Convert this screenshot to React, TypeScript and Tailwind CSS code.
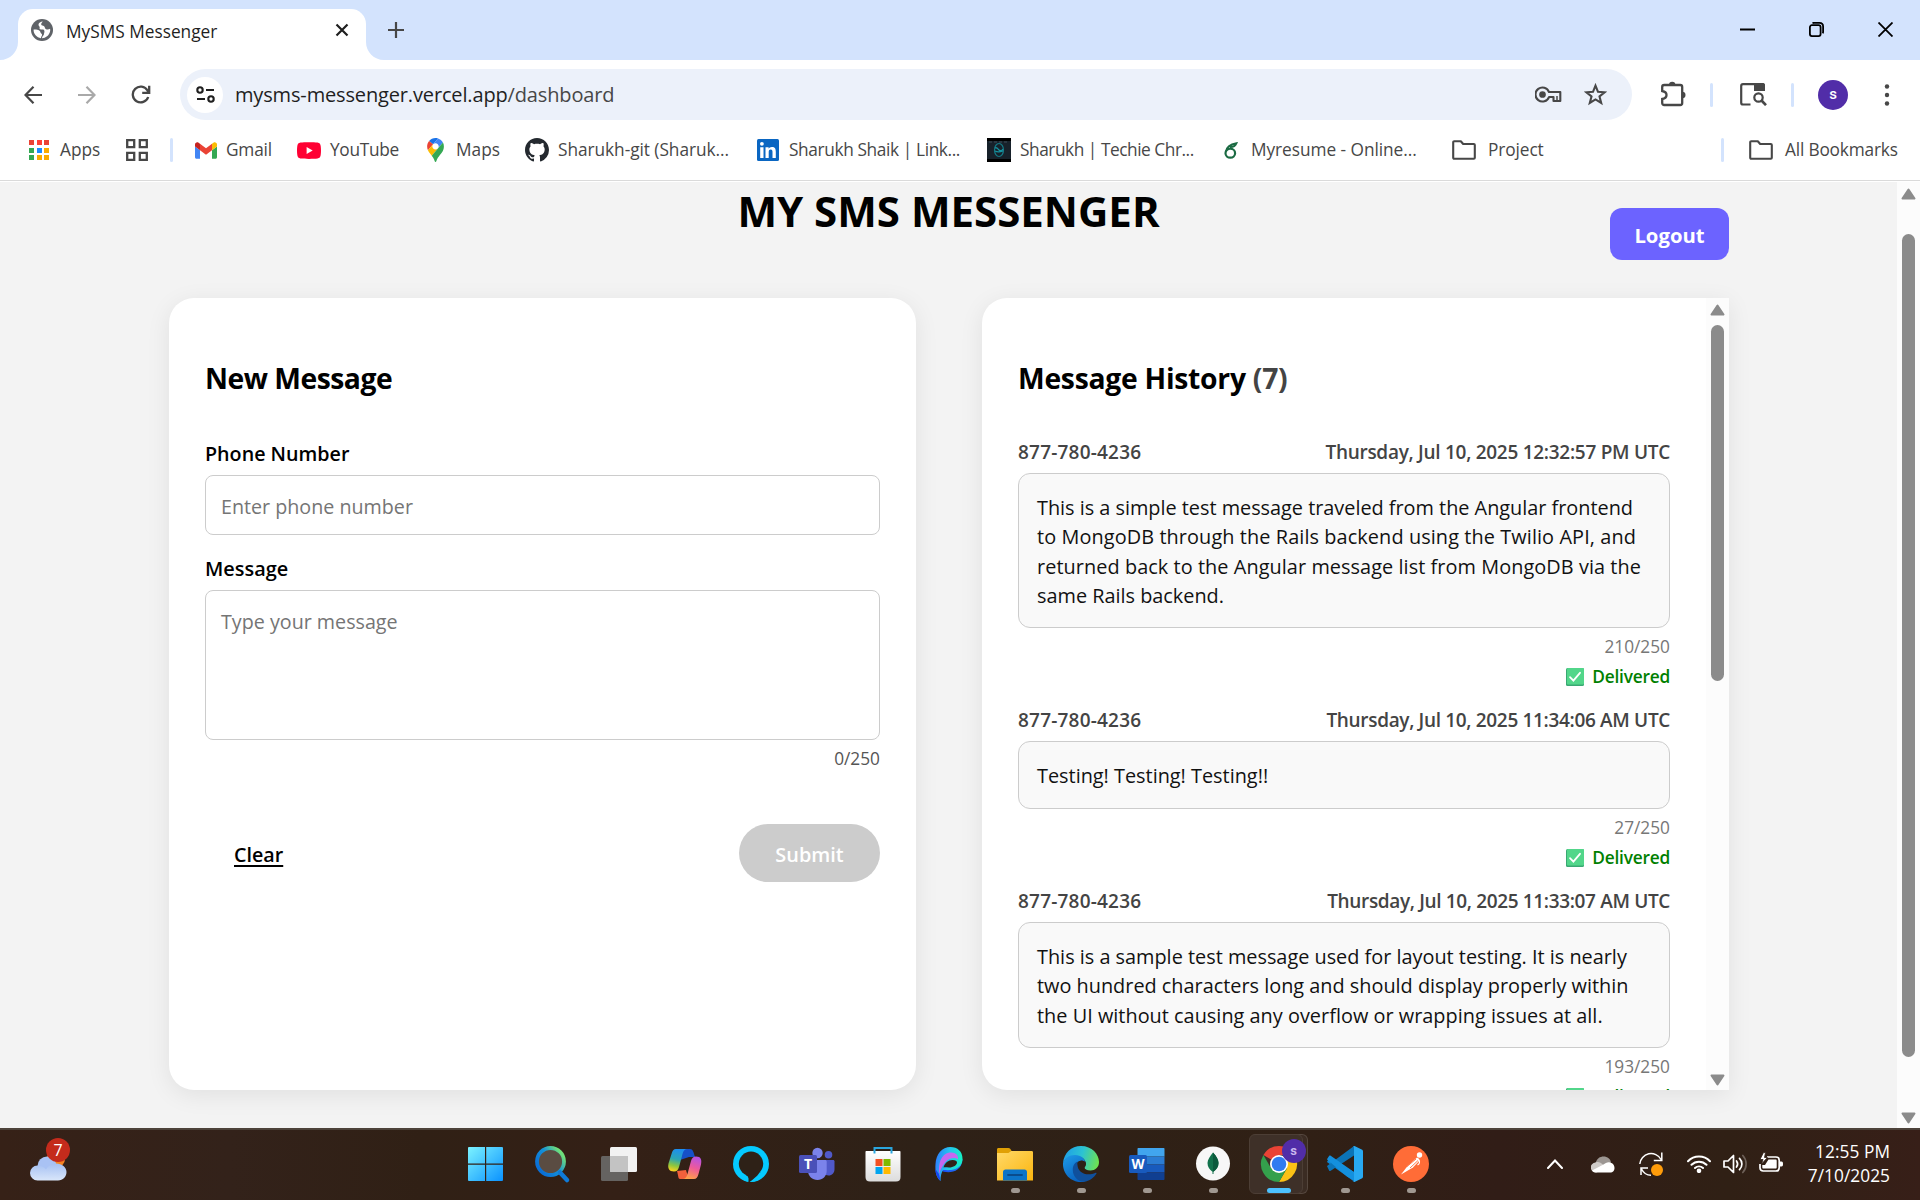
import type { ReactNode } from "react";

/* ---------- browser chrome icons ---------- */

const Globe = () => (
  <svg className="size-[22px]" viewBox="0 0 22 22">
    <circle cx="11" cy="11" r="11" fill="#5f6368" />
    <path d="M11.800 2.600C9.500 2.800 7.800 4 7.500 5.500c-.2 1.400 1.300 1.700 1.200 3-.1.900-.3 1.400.3 1.800.8.400 2.400-.2 3.400.3 1.300.6 1.200 2.300.8 3.400-.4 1.200-.2 2.200-1.300 3-.6.500-.9 1.200-.9 2.300 3.800-.2 7-2.800 8-6.500.3-1.200.3-2 .1-3.100-1.300.9-3 1.200-4.300.3-1.200-.8-.6-2-1.700-2.800-1-.7-2.600-.2-2.900-1.600-.2-1 .8-2 1.600-3z" fill="#fff" />
    <path d="M2.600 10.600c1.900-.2 4.200 0 5.600.9 1.600 1 1 2.300 2.300 3.200.8.6.7 1.600.2 2.300-.5.600-.6 1.200-.7 2.300-4.300-.6-7.600-4.200-7.400-8.700z" fill="#fff" />
  </svg>
);

const Folder = () => (
  <svg className="h-[20px] w-[24px] shrink-0" viewBox="0 0 24 20" fill="none" stroke="#474747" strokeWidth="2.100" strokeLinejoin="round">
    <path d="M1.200 17.800V2.200c0-.6.400-1 1-1h6.600L11.200 4H21.800c.6 0 1 .4 1 1v12.800c0 .6-.4 1-1 1H2.200c-.6 0-1-.4-1-1z" />
  </svg>
);

const AppsIcon = () => {
  const colors = ["#ea4335", "#ff4137", "#ea4335", "#34a853", "#1a8cff", "#fbab00", "#34a853", "#f9ab00", "#fbab00"];
  return (
    <div className="grid size-[20px] shrink-0 grid-cols-3 gap-[2.500px]">
      {colors.map((c, i) => (
        <span key={i} style={{ backgroundColor: c }} />
      ))}
    </div>
  );
};

const GridIcon = () => (
  <svg className="size-[22px] shrink-0" viewBox="0 0 22 22" fill="none" stroke="#474747" strokeWidth="2.300">
    <path d="M1.200 1.200h7v7h-7zM13.800 1.200h7v7h-7zM1.200 13.800h7v7h-7zM13.800 13.800h7v7h-7z" />
  </svg>
);

const GmailIcon = () => (
  <svg className="h-[17px] w-[22px] shrink-0" viewBox="52 42 88 66">
    <path fill="#4285f4" d="M58 108h14V74L52 59v43c0 3.320 2.690 6 6 6" />
    <path fill="#34a853" d="M120 108h14c3.320 0 6-2.690 6-6V59l-20 15" />
    <path fill="#fbbc04" d="M120 48v26l20-15v-8c0-7.420-8.470-11.650-14.400-7.200" />
    <path fill="#ea4335" d="M72 74V48l24 18 24-18v26L96 92" />
    <path fill="#c5221f" d="M52 51v8l20 15V48l-5.600-4.200c-5.940-4.450-14.400-.22-14.400 7.200" />
  </svg>
);

const YouTubeIcon = () => (
  <svg className="h-[17px] w-[24px] shrink-0" viewBox="0 0 24 17">
    <path d="M3.500.5C7 0 17 0 20.500.5 22.500.8 23.500 2 23.700 4c.4 3 .4 6 0 9-.2 2-1.200 3.200-3.200 3.500-3.500.5-13.500.5-17 0C1.500 16.200.5 15 .3 13c-.4-3-.4-6 0-9C.5 2 1.500.8 3.500.5z" fill="#ff0033" />
    <path d="M9.600 5v7l6.100-3.500z" fill="#fff" />
  </svg>
);

const MapsIcon = () => (
  <svg className="h-[24px] w-[17px] shrink-0" viewBox="0 0 92.300 132.300">
    <path fill="#1a73e8" d="M60.200 2.200C55.800.8 51 0 46.100 0 32 0 19.300 6.400 10.800 16.500l21.800 18.300L60.200 2.200z" />
    <path fill="#ea4335" d="M10.800 16.500C4.100 24.500 0 34.900 0 46.100c0 8.700 1.700 15.700 4.600 22l28-33.300-21.800-18.300z" />
    <path fill="#4285f4" d="M46.200 28.500c9.800 0 17.700 7.900 17.700 17.700 0 4.300-1.600 8.300-4.200 11.400 0 0 13.900-16.600 27.500-32.700-5.600-10.800-15.300-19-27-22.700L32.600 34.800c3.300-3.800 8.100-6.300 13.600-6.300" />
    <path fill="#fbbc04" d="M46.200 63.800c-9.800 0-17.700-7.900-17.700-17.700 0-4.300 1.500-8.300 4.100-11.300l-28 33.300c4.800 10.600 12.800 19.200 21 29.900l34.100-40.500c-3.300 3.900-8.100 6.300-13.500 6.300" />
    <path fill="#34a853" d="M59.100 109.200c15.400-24.100 33.300-35 33.300-63 0-7.700-1.900-14.900-5.200-21.300L25.600 98c2.600 3.400 5.300 7.300 7.900 11.300 9.400 14.500 6.800 23.100 12.800 23.100s3.400-8.700 12.800-23.200" />
  </svg>
);

const GithubIcon = () => (
  <svg className="size-[24px] shrink-0" viewBox="0 0 16 16" fill="#24292f">
    <path d="M8 0C3.580 0 0 3.580 0 8c0 3.540 2.290 6.530 5.470 7.590.4.070.55-.17.55-.38 0-.19-.01-.82-.01-1.490-2.010.37-2.530-.49-2.690-.94-.09-.23-.48-.94-.82-1.130-.28-.15-.68-.52-.01-.53.63-.01 1.080.58 1.230.82.72 1.210 1.870.87 2.330.66.07-.52.28-.87.51-1.070-1.780-.2-3.640-.89-3.640-3.950 0-.87.31-1.590.82-2.150-.08-.2-.36-1.020.08-2.120 0 0 .67-.21 2.200.82.64-.18 1.320-.27 2-.27s1.360.09 2 .27c1.530-1.040 2.200-.82 2.200-.82.44 1.100.16 1.920.08 2.120.51.56.82 1.270.82 2.150 0 3.070-1.870 3.750-3.650 3.950.29.25.54.73.54 1.480 0 1.070-.01 1.930-.01 2.200 0 .21.15.46.55.38A8.010 8.010 0 0 0 16 8c0-4.420-3.580-8-8-8z" />
  </svg>
);

const LinkedinIcon = () => (
  <svg className="size-[22px] shrink-0" viewBox="0 0 22 22">
    <rect width="22" height="22" rx="1.500" fill="#0a66c2" />
    <path d="M3.200 8.200h3.300V19H3.200zM8.500 8.200h3.100v1.500c.6-1 1.700-1.800 3.300-1.800 3.200 0 3.900 2 3.900 4.900V19h-3.300v-5.500c0-1.400-.1-2.900-1.800-2.900s-2 1.300-2 2.800V19H8.500z" fill="#fff" />
    <circle cx="4.900" cy="4.800" r="1.900" fill="#fff" />
  </svg>
);

const TechieIcon = () => (
  <svg className="size-[24px] shrink-0" viewBox="0 0 24 24">
    <rect width="24" height="24" fill="#000" />
    <rect y="3" width="24" height="18" fill="#17212a" />
    <path d="M2 4h20" stroke="#2a3741" strokeWidth="2" strokeDasharray="3 2" />
    <ellipse cx="12" cy="12" rx="4.500" ry="6.500" fill="none" stroke="#157985" strokeWidth="1.200" />
    <path d="M8 10c2-1 3 1 4 2s3 1 4-1M8 13c2 1 5 1 8 0" stroke="#1593a0" strokeWidth="1.300" fill="none" />
  </svg>
);

const ResumeIcon = () => (
  <svg className="h-[17px] w-[14px] shrink-0" viewBox="0 0 14 17" fill="none" stroke="#1b6b43">
    <ellipse cx="6.300" cy="11.200" rx="4.800" ry="4.500" strokeWidth="2.200" />
    <path d="M2 9.500C2.500 5 5.500 2.500 12.500 1.200c-1 2.500-3.500 4-6.500 3.900" strokeWidth="1.900" />
  </svg>
);

/* ---------- bookmark bar ---------- */

const Bookmark = ({ icon, label, className, text }: { icon: ReactNode; label: string; className: string; text: string }) => (
  <div className={`flex shrink-0 items-center ${className}`}>
    {icon}
    <span className={`whitespace-pre text-[17.300px] leading-6 text-[#474747] ${text}`}>{label}</span>
  </div>
);

const Divider = ({ className = "" }: { className?: string }) => <div className={`h-6 w-[3px] shrink-0 rounded-sm bg-[#d3e3fd] ${className}`} />;

/* ---------- page pieces ---------- */

const Scrollbar = ({ thumb }: { thumb: string }) => (
  <div className="flex w-[23px] shrink-0 flex-col items-center bg-[#fcfcfc] pb-[4px] pt-[6px]">
    <svg className="h-[12px] w-[15px] shrink-0" viewBox="0 0 15 12">
      <path d="M7.500 1.500 13.500 10.500h-12z" fill="#8b8b8b" stroke="#8b8b8b" strokeWidth="2" strokeLinejoin="round" />
    </svg>
    <div className={`w-[13px] shrink-0 rounded-full bg-[#8b8b8b] ${thumb}`} />
    <svg className="mt-auto h-[12px] w-[15px] shrink-0" viewBox="0 0 15 12">
      <path d="M7.500 10.500 13.500 1.500h-12z" fill="#8b8b8b" stroke="#8b8b8b" strokeWidth="2" strokeLinejoin="round" />
    </svg>
  </div>
);

const Check = () => (
  <svg className="h-[18px] w-[18px]" viewBox="0 0 18 18">
    <rect width="18" height="18" rx="1.500" fill="#3aa873" />
    <rect x="1" width="17" height="16.500" rx="1" fill="#52d68a" />
    <path d="m4 9.200 3.400 3.500L14 4.800" fill="none" stroke="#fff" strokeWidth="1.800" strokeLinecap="round" />
  </svg>
);

type Msg = { date: string; dateTrack: string; lines: string[]; tracks: string[]; count: string; box: string };

const messages: Msg[] = [
  {
    date: "Thursday, Jul 10, 2025 12:32:57 PM UTC",
    dateTrack: "tracking-[-0.280px]",
    lines: [
      "This is a simple test message traveled from the Angular frontend",
      "to MongoDB through the Rails backend using the Twilio API, and",
      "returned back to the Angular message list from MongoDB via the",
      "same Rails backend.",
    ],
    tracks: ["tracking-[-0.010px]", "tracking-[0.100px]", "tracking-[0.070px]", ""],
    count: "210/250",
    box: "h-[155px]",
  },
  {
    date: "Thursday, Jul 10, 2025 11:34:06 AM UTC",
    dateTrack: "tracking-[-0.330px]",
    lines: ["Testing! Testing! Testing!!"],
    tracks: [""],
    count: "27/250",
    box: "h-[68px]",
  },
  {
    date: "Thursday, Jul 10, 2025 11:33:07 AM UTC",
    dateTrack: "tracking-[-0.350px]",
    lines: [
      "This is a sample test message used for layout testing. It is nearly",
      "two hundred characters long and should display properly within",
      "the UI without causing any overflow or wrapping issues at all.",
    ],
    tracks: ["", "", "tracking-[0.020px]"],
    count: "193/250",
    box: "h-[126px]",
  },
];

const MessageItem = ({ m }: { m: Msg }) => (
  <div className="mb-[12px]">
    <div className="flex h-[36px] items-center justify-between pb-[6px] text-[19px] font-semibold text-[#444]">
      <span className="tracking-[0.200px]">877-780-4236</span>
      <span className={`whitespace-pre ${m.dateTrack}`}>{m.date}</span>
    </div>
    <div className={`rounded-[12px] border border-[#ccc] bg-[#f9f9f9] px-[18px] pt-[18.500px] ${m.box}`}>
      {m.lines.map((l, i) => (
        <div key={l} className={`h-[29.500px] whitespace-pre text-[19.870px] leading-[29.500px] text-[#111] ${m.tracks[i]}`}>
          {l}
        </div>
      ))}
    </div>
    <div className="mt-[5px] h-[28px] text-right text-[17.300px] leading-[28px] text-[#777]">{m.count}</div>
    <div className="flex h-[32px] items-center justify-end gap-[8px] text-[17.300px] font-semibold tracking-[-0.200px] text-[#008000]">
      <Check />
      Delivered
    </div>
  </div>
);

/* ---------- taskbar icons ---------- */

const Svg = ({ children }: { children: ReactNode }) => (
  <svg className="size-[36px] shrink-0 overflow-visible" viewBox="0 0 36 36">
    {children}
  </svg>
);

const StartIcon = () => (
  <Svg>
    <defs>
      <linearGradient id="st" x1="0" y1="0" x2="1" y2="1" gradientUnits="objectBoundingBox">
        <stop offset="0" stopColor="#7cf3ff" />
        <stop offset="1" stopColor="#0a92ff" />
      </linearGradient>
    </defs>
    <path d="M0 1h16v16.500H-1V2a1 1 0 0 1 1-1zM17.200 1H33a1 1 0 0 1 1 1v15.500H17.200zM-1 18.800h17V35H0a1 1 0 0 1-1-1zM17.200 18.800H34V34a1 1 0 0 1-1 1H17.200z" fill="url(#st)" />
  </Svg>
);

const SearchIcon = () => (
  <Svg>
    <defs>
      <linearGradient id="se" x1="0.100" y1="0.800" x2="0.900" y2="0.200">
        <stop offset="0" stopColor="#0a6fd6" />
        <stop offset=".55" stopColor="#1491d8" />
        <stop offset="1" stopColor="#6fe07a" />
      </linearGradient>
    </defs>
    <circle cx="15.500" cy="15.500" r="13.500" fill="#5a4c42" stroke="url(#se)" strokeWidth="3.800" />
    <path d="m25 26.500 7 7.500" stroke="#0f7ad8" strokeWidth="4.500" strokeLinecap="round" />
  </Svg>
);

const TaskViewIcon = () => (
  <Svg>
    <rect y="10" width="27" height="25" rx="1.500" fill="#656361" />
    <rect x="9" y="1" width="27" height="25" rx="1.500" fill="#f2f2f2" />
    <path d="M9 10h18v16H10.500A1.500 1.500 0 0 1 9 24.500z" fill="#c3c3c3" />
  </Svg>
);

const CopilotIcon = () => (
  <Svg>
    <defs>
      <linearGradient id="cp1" x1=".5" y1="0" x2=".3" y2="1">
        <stop offset="0" stopColor="#1d8ef0" />
        <stop offset=".45" stopColor="#2ba6b4" />
        <stop offset=".75" stopColor="#8fc63d" />
        <stop offset="1" stopColor="#ffd21f" />
      </linearGradient>
      <linearGradient id="cp2" x1=".7" y1="0" x2=".4" y2="1">
        <stop offset="0" stopColor="#b452e6" />
        <stop offset=".5" stopColor="#ee5a9a" />
        <stop offset="1" stopColor="#ffa04a" />
      </linearGradient>
    </defs>
    <path d="M9 3h14c3 0 3.500 3 5 8h-6l-9 3z" fill="#1650c8" />
    <path d="M13 33h14c-4 0-7-4-8-9l-9 1c1.500 4.500 1 8 3 8z" fill="#f2603c" />
    <path d="M9 3h11c-3 0-4 3-5 7l-3 11c-1 3-2 4.500-5 4.500C2 25.500.5 22 1.500 17.500L4.500 8C5.500 4.500 6.500 3 9 3z" fill="url(#cp1)" />
    <path d="M27 33H16c3 0 4-3 5-7l3-11c1-3 2-4.500 5-4.500 5 0 6 3.500 5 8L31.500 28c-1 3.500-2 5-4.500 5z" fill="url(#cp2)" />
  </Svg>
);

const AlexaIcon = () => (
  <Svg>
    <circle cx="18" cy="18" r="18" fill="#05caff" />
    <circle cx="18" cy="17.800" r="12.200" fill="#2e2117" />
    <path d="M15.400 36.200v-3.800c0-1.800-1.600-2.300-3-3.300l5.600-.2 9.500-2.400c-1.500 3.500-5.500 7-10.300 9.700z" fill="#2e2117" />
    <path d="M16.600 36c3-2.500 7-5 9.900-9.300l5.500 1.600c-3 4.200-8 7.500-14 7.700z" fill="#05caff" />
    <path d="M15.200 35.800v-3.600c0-1.800-1.800-2.400-3.200-3.400l-5 2.200c2 2.400 5 4.300 8.200 4.800z" fill="#05caff" />
  </Svg>
);

const TeamsIcon = () => (
  <Svg>
    <circle cx="29.500" cy="8.800" r="3.800" fill="#5059c9" />
    <circle cx="18.500" cy="7" r="5.200" fill="#7b83eb" />
    <path d="M26 14h8c1 0 1.500.6 1.500 1.500V23c0 4-2.500 6.500-6 6.500-2 0-3.500-1-3.500-1z" fill="#5059c9" />
    <path d="M10 14h16c1 0 1.700.7 1.700 1.700V25c0 5-4 9-9.200 9S9 30 9 25z" fill="#7b83eb" />
    <rect y="9" width="18" height="18" rx="1.500" fill="#4a50b8" />
    <text x="9" y="23" fill="#fff" fontSize="14" fontWeight="700" textAnchor="middle" fontFamily="Open Sans">T</text>
  </Svg>
);

const StoreIcon = () => (
  <Svg>
    <defs>
      <linearGradient id="sb" x1="0" y1="0" x2="0" y2="1">
        <stop offset="0" stopColor="#fff" />
        <stop offset="1" stopColor="#dcdcdc" />
      </linearGradient>
    </defs>
    <path d="M.5 6c0-.6.400-1 1-1h33c.6 0 1 .4 1 1v25c0 3-1.500 4.500-4.500 4.500H5C2 35.500.5 34 .5 31z" fill="url(#sb)" />
    <path d="M9.500 7.500v-5.500h17v5.500" fill="none" stroke="#2aa6de" strokeWidth="2" />
    <path d="M10.500 13h7v7h-7z" fill="#f25022" />
    <path d="M18.500 13h7v7h-7z" fill="#7fba00" />
    <path d="M10.500 21h7v7h-7z" fill="#00a4ef" />
    <path d="M18.500 21h7v7h-7z" fill="#ffb900" />
  </Svg>
);

const PaletteIcon = () => (
  <Svg>
    <defs>
      <linearGradient id="pa" x1="0" y1=".3" x2="1" y2=".5">
        <stop offset="0" stopColor="#2f7bff" />
        <stop offset=".45" stopColor="#25c3ee" />
        <stop offset="1" stopColor="#13f5c0" />
      </linearGradient>
      <linearGradient id="pb" x1="0" y1="1" x2="1" y2="0">
        <stop offset="0" stopColor="#1746f5" />
        <stop offset="1" stopColor="#2aa0f5" />
      </linearGradient>
    </defs>
    <path d="M9.500 24C14 28 31 28 31.500 13L20 16z" fill="url(#pb)" />
    <path d="M9.500 35C5 31 4 25 4.500 18 5 8 11 1 19.500 1c7 0 12 4.500 12 11.500 0 6-4 10.500-11.500 11.500-3 .3-6 0-8 0-1.500 2.500-2.500 6-2.500 11z" fill="url(#pa)" />
    <path d="M8.500 29C6.500 17 11 6.500 20 6.500c5 0 7.500 3 7 7-1.500-2.500-9-2.500-13 3-2.500 3.500-5 7-6 12.500z" fill="#c668f0" />
    <path d="M12.500 21.500c1-4.500 5-7.500 9-7.500 3 0 4.500 1 4.500 2.500 0 2.500-3.500 5-8 5-2 0-4-.3-5.500 0z" fill="#31221a" />
    <path d="M9.500 35c-3-2.500-5-7-5.200-12l3.700 5z" fill="#1746f5" />
  </Svg>
);

const ExplorerIcon = () => (
  <Svg>
    <defs>
      <linearGradient id="ex" x1="0" y1="0" x2="1" y2="1">
        <stop offset="0" stopColor="#ffd968" />
        <stop offset="1" stopColor="#fbb50f" />
      </linearGradient>
    </defs>
    <path d="M0 3.500C0 2.500.7 2 1.500 2h10c1 0 1.800.8 3 2.500L12 8H0z" fill="#e0a005" />
    <path d="M0 7h11.500L14 5h20.500c1 0 1.500.5 1.500 1.500V34.500H0z" fill="url(#ex)" />
    <path d="M6 34.500V26c0-1.500 1-2.500 2.500-2.500h19c1.500 0 2.500 1 2.500 2.500v8.500z" fill="#0c74c8" />
    <path d="M11 29h14" stroke="#0a4c8c" strokeWidth="1.800" strokeLinecap="round" />
  </Svg>
);

const EdgeIcon = () => (
  <Svg>
    <defs>
      <linearGradient id="eg" x1="0" y1=".4" x2="1" y2=".6">
        <stop offset="0" stopColor="#1e9fe8" />
        <stop offset=".5" stopColor="#2cc3d2" />
        <stop offset="1" stopColor="#6fe24f" />
      </linearGradient>
      <linearGradient id="eb" x1="0" y1="0" x2=".5" y2="1">
        <stop offset="0" stopColor="#1e9be8" />
        <stop offset="1" stopColor="#0a63bf" />
      </linearGradient>
    </defs>
    <path d="M0 17C1 7 8 0 18 0c11 0 18 8 18 16 0 5.500-4 8.500-8.500 8.500-3.500 0-6-1-6-2.500 0-1 1.500-1.500 1.500-4 0-4-4-8-10.500-8C6 10 2 13 0 17z" fill="url(#eg)" />
    <path d="M0 17c1.500-5 6-8 12-8 6 0 10.500 4 10.500 8.500 0-2-2-3-4-3-3.500 0-7 4-7 8.500 0 6.500 5 12 11 12.500C21 36 19.500 36 18 36 8 36-.5 28 0 17z" fill="url(#eb)" />
    <path d="M14.500 15.500C11 17.500 9.800 20 9.800 24c0 6 4.500 11.500 11.200 11.800 5.500-.6 10-4 12.500-8.300.3-.7-.2-1-.8-.7-9 4-18.200 0-18.200-8 0-1.500 0-2.300 0-3.300z" fill="#10509c" />
    <path d="M22.800 17c0 2.500-1.500 3-1.500 4.500 0 1.200 1 2 2.500 2.600-5 .4-9.200-2.600-9.200-7.100 1.500-2.500 6.500-3.500 8.200 0z" fill="#2e2117" />
  </Svg>
);

const WordIcon = () => (
  <Svg>
    <path d="M9.500 2h25c.6 0 1 .4 1 1v7.500h-27V3c0-.6.400-1 1-1z" fill="#41a5ee" />
    <path d="M8.500 10.500h27v8h-27z" fill="#2b7cd3" />
    <path d="M8.500 18.500h27v8h-27z" fill="#185abd" />
    <path d="M8.500 26.500h27V33c0 .6-.4 1-1 1h-25c-.6 0-1-.4-1-1z" fill="#103f91" />
    <rect y="9" width="18" height="18" rx="1.500" fill="#185abd" />
    <text x="9" y="23" fill="#fff" fontSize="13.500" fontWeight="700" textAnchor="middle" fontFamily="Open Sans">W</text>
  </Svg>
);

const MongoIcon = () => (
  <Svg>
    <circle cx="18" cy="17.500" r="17" fill="#f7f7f7" />
    <path d="M18 6.500c3.500 4 5.500 7 5.500 10.500 0 4-2 6.500-5 8.700V28h-1v-2.300c-3-2.200-5-4.700-5-8.700C12.500 13.500 15 10.500 18 6.500z" fill="#12724c" />
    <path d="M18 6.500c3.500 4 5.500 7 5.500 10.500 0 4-2 6.500-5.500 8.700z" fill="#0b5a3d" />
  </Svg>
);

const ChromeIcon = () => (
  <Svg>
    <path d="M18 18 2.400 9A18 18 0 0 1 33.600 9H18z" fill="#ea4335" />
    <path d="M18 18 33.600 9A18 18 0 0 1 18 36l7.800-13.500z" fill="#fbc116" />
    <path d="M18 18l7.800 4.500L18 36A18 18 0 0 1 2.400 9l7.800 13.500z" fill="#34a04c" />
    <circle cx="18" cy="18" r="9" fill="#fff" />
    <circle cx="18" cy="18" r="7.300" fill="#2f7bf0" />
  </Svg>
);

const VscodeIcon = () => (
  <Svg>
    <path d="M.6 14.800c-.6.500-.6 1.300 0 1.800L27 35.600V26L3.700 13.300c-.5-.4-1-.4-1.500 0z" fill="#0f86d2" />
    <path d="M.6 19.400c-.6.500-.6 1.300 0 1.800l1.600 3.500c.5.400 1 .4 1.500 0L27 9.500V.3c-.5.100-1 .4-1.300.7z" fill="#0b74b8" />
    <path d="M.6 12.300c-.6.500-.6 1.300 0 1.800L20 30.500l7 4V26L3.700 9.800c-.5-.4-1-.4-1.500 0z" fill="#1490de" />
    <path d="M25.500 35.500c1 .6 1.600.6 2.500.2l6.700-3.200c.8-.4 1.300-1.100 1.300-2V5.500c0-.9-.5-1.600-1.300-2L28 .3c-.9-.4-1.500-.4-2.500.2 1-.6 1.500.2 1.500 1v33c0 .8-.5 1.600-1.500 1z" fill="#28a9f2" />
  </Svg>
);

const PostmanIcon = () => (
  <Svg>
    <circle cx="18" cy="18" r="18" fill="#ff6c37" />
    <circle cx="26.500" cy="9" r="2.700" fill="#fff" />
    <path d="M24 11.500c1.500.5 2.500 1.500 2.500 3L20 21.500 8 28.500l7-9z" fill="#fff" />
    <path d="m14 20.500 9-7.500M17 22l8-7.500" stroke="#ff6c37" strokeWidth=".9" />
    <path d="M26 14c1 2 .5 4-1.500 5" stroke="#fff" strokeWidth="1.200" fill="none" />
  </Svg>
);

const Slot = ({ children, open }: { children: ReactNode; open?: boolean }) => (
  <div className="flex w-[66px] shrink-0 flex-col items-center pt-[16px]">
    {children}
    {open && <div className="mt-[6px] h-[5px] w-[9px] rounded-full bg-[#a09891]" />}
  </div>
);

export default function App() {
  return (
    <div className="flex h-[1200px] w-[1920px] flex-col overflow-hidden bg-white font-['Open_Sans',sans-serif] leading-normal">
      {/* tab strip */}
      <div className="flex h-[60px] shrink-0 bg-[#d3e3fd]">
        <svg className="mt-[42px] h-[18px] w-[18px] shrink-0" viewBox="0 0 18 18">
          <path d="M18 0v18H0C10 18 18 10 18 0z" fill="#fff" />
        </svg>
        <div className="mt-[9px] flex h-[51px] w-[348px] shrink-0 items-center rounded-t-[15px] bg-white pb-[9px] pl-[13px] pr-[17px]">
          <Globe />
          <span className="ml-[13px] mt-[3px] whitespace-pre text-[17.300px] text-[#1f1f1f]">MySMS Messenger</span>
          <svg className="ml-auto size-[14px]" viewBox="0 0 14 14" stroke="#1f1f1f" strokeWidth="2.200">
            <path d="m1.500 1.500 11 11M12.500 1.500l-11 11" />
          </svg>
        </div>
        <svg className="mt-[42px] h-[18px] w-[18px] shrink-0" viewBox="0 0 18 18">
          <path d="M0 0v18h18C8 18 0 10 0 0z" fill="#fff" />
        </svg>
        <svg className="ml-[4px] mt-[22px] size-[16px]" viewBox="0 0 16 16" stroke="#474747" strokeWidth="2.200">
          <path d="M8 0v16M0 8h16" />
        </svg>
        <div className="ml-auto mr-[27px] flex h-[59px] items-center gap-[54px]">
          <svg className="size-[15px]" viewBox="0 0 15 15">
            <path d="M0 7.500h15" stroke="#000" strokeWidth="2" />
          </svg>
          <svg className="size-[15px]" viewBox="0 0 15 15" fill="none" stroke="#000" strokeWidth="1.800">
            <rect x=".9" y="3.200" width="10.700" height="10.900" rx="2" />
            <path d="M3.500 1C4 .9 4.500.9 5 .9h5.500c2.200 0 3.600 1.400 3.600 3.600v5.300c0 .6-.1 1.100-.3 1.500" />
          </svg>
          <svg className="size-[15px]" viewBox="0 0 15 15" stroke="#000" strokeWidth="1.800">
            <path d="m.5.500 14 14M14.500.5l-14 14" />
          </svg>
        </div>
      </div>

      {/* toolbar */}
      <div className="flex h-[69px] shrink-0 items-center pl-[24px]">
        <svg className="size-[18px]" viewBox="0 0 18 18" fill="none" stroke="#474747" strokeWidth="2.200">
          <path d="M18 9H1.500M9.500.8 1.500 9l8 8.200" />
        </svg>
        <svg className="ml-[36px] size-[18px]" viewBox="0 0 18 18" fill="none" stroke="#a9a9a9" strokeWidth="2.200">
          <path d="M0 9h16.500M8.500.8l8 8.200-8 8.200" />
        </svg>
        <svg className="ml-[35px] size-[20px]" viewBox="0 0 20 20" fill="none" stroke="#474747" strokeWidth="2.300">
          <path d="M17.200 12A7.900 7.900 0 1 1 16.500 5.500L18 7.500M18.200.8v7h-7" />
        </svg>
        <div className="ml-[29px] flex h-[51px] w-[1452px] items-center rounded-full bg-[#ecf1fa] pl-[7px] pr-[24px]">
          <div className="flex size-[36px] shrink-0 items-center justify-center rounded-full bg-white">
            <svg className="h-[17px] w-[19px]" viewBox="0 0 19 17" fill="none" stroke="#1f1f1f" strokeWidth="2.100">
              <circle cx="4" cy="4" r="2.700" />
              <path d="M10 4h8M1 13h8" />
              <circle cx="15" cy="13" r="2.700" />
            </svg>
          </div>
          <span className="ml-[12px] whitespace-pre text-[20px] tracking-[-0.150px] text-[#1f1f1f]">
            mysms-messenger.vercel.app<span className="text-[#474747]">/dashboard</span>
          </span>
          <svg className="ml-auto h-[17px] w-[27px]" viewBox="0 0 27 17" fill="none" stroke="#474747" strokeWidth="2.100">
            <path d="M14 6a7 7 0 1 0 0 5h4.500v4h6.800V6z" strokeLinejoin="round" />
            <circle cx="7.500" cy="8.500" r="2.300" fill="#474747" />
            <path d="M22 10v5" strokeWidth="1.500" />
          </svg>
          <svg className="ml-[22px] mr-px size-[23px]" viewBox="0 0 23 23" fill="none" stroke="#474747" strokeWidth="2.100">
            <path d="m11.500 2.600 2.500 6.200 6.600.5-5.100 4.200 1.700 6.500-5.700-3.600-5.700 3.600 1.700-6.500-5.100-4.200 6.600-.5z" />
          </svg>
        </div>
        <svg className="mb-px ml-[29px] size-[26px]" viewBox="0 0 26 26">
          <path d="M1.200 6c0-1.200.8-2 2-2h16c1.200 0 2 .8 2 2v16c0 1.200-.8 2-2 2h-16c-1.200 0-2-.8-2-2v-4c2.800-.5 4.300-2 4.300-4s-1.500-3.500-4.300-4z" fill="none" stroke="#474747" strokeWidth="2.300" />
          <path d="M8 4a3.200 3.200 0 0 1 6.400 0zM21.200 10.800a3.300 3.300 0 0 1 0 6.600z" fill="#474747" />
        </svg>
        <Divider className="ml-[23px]" />
        <svg className="ml-[27px] h-[23px] w-[27px]" viewBox="0 0 27 23" fill="none" stroke="#474747" strokeWidth="2.200">
          <path d="M10.500 21.500H3c-1 0-1.800-.8-1.800-1.800V3c0-1 .8-1.800 1.800-1.800h19c1 0 1.800.8 1.800 1.800v3" />
          <path d="M14 0h9c1.500 0 2 1 2 2v6H14z" fill="#474747" stroke="none" />
          <circle cx="18.500" cy="14.500" r="4.200" />
          <path d="m21.500 17.500 4.500 4.700" strokeWidth="2.600" />
        </svg>
        <Divider className="ml-[24px]" />
        <div className="ml-[24px] flex size-[30px] items-center justify-center rounded-full bg-[#512da8] font-['Roboto',sans-serif] text-[15px] font-medium text-white">s</div>
        <svg className="ml-[36px] h-[24px] w-[6px]" viewBox="0 0 6 24" fill="#474747">
          <circle cx="3" cy="3.500" r="2.200" />
          <circle cx="3" cy="12" r="2.200" />
          <circle cx="3" cy="20.500" r="2.200" />
        </svg>
      </div>

      {/* bookmarks */}
      <div className="mb-px flex h-[52px] shrink-0 items-center border-b border-[#dadada] pb-[9px] pl-[29px]">
        <Bookmark icon={<AppsIcon />} label="Apps" className="w-[97px]" text="ml-[11px]" />
        <GridIcon />
        <Divider className="ml-[22px]" />
        <Bookmark icon={<GmailIcon />} label="Gmail" className="ml-[22px] w-[102px]" text="ml-[9px] tracking-[-0.200px]" />
        <Bookmark icon={<YouTubeIcon />} label="YouTube" className="w-[130px]" text="ml-[9px] tracking-[-0.300px]" />
        <Bookmark icon={<MapsIcon />} label="Maps" className="w-[98px]" text="ml-[12px]" />
        <Bookmark icon={<GithubIcon />} label="Sharukh-git (Sharuk..." className="w-[232px]" text="ml-[9px] tracking-[-0.050px]" />
        <Bookmark icon={<LinkedinIcon />} label="Sharukh Shaik | Link..." className="w-[230px]" text="ml-[10px] tracking-[-0.380px]" />
        <Bookmark icon={<TechieIcon />} label="Sharukh | Techie Chr..." className="w-[237px]" text="ml-[9px] tracking-[-0.460px]" />
        <Bookmark icon={<ResumeIcon />} label="Myresume - Online..." className="w-[228px]" text="ml-[13px] tracking-[-0.050px]" />
        <Bookmark icon={<Folder />} label="Project" className="w-[120px]" text="ml-[12px] tracking-[-0.100px]" />
        <Divider className="ml-auto" />
        <Bookmark icon={<Folder />} label="All Bookmarks" className="ml-[25px] w-[171px]" text="ml-[12px] tracking-[-0.180px]" />
      </div>

      {/* viewport */}
      <div className="flex h-[946px] shrink-0">
        <div className="h-[946px] w-[1897px] bg-[#f3f3f3]">
          <div className="flex h-[116px] pl-[169px] pr-[168px]">
            <h1 className="flex-1 whitespace-pre pl-[118px] pt-px text-center text-[42px] font-bold leading-[56px] text-black">MY SMS MESSENGER</h1>
            <button className="mt-[26px] h-[52px] w-[119px] rounded-[12px] bg-[#6c63ff] pt-[3px] text-[20.300px] font-bold text-white">Logout</button>
          </div>
          <div className="flex gap-[66px] pl-[169px]">
            <section className="h-[792px] w-[747px] rounded-[25px] bg-white px-[36px] pt-[60px] shadow-[0_5px_25px_rgba(0,0,0,0.08)]">
              <h2 className="text-[28.300px] font-bold leading-[41px] tracking-[-0.500px] text-black">New Message</h2>
              <div className="mt-[39px] h-[37px] text-[19.700px] font-semibold leading-[32px] text-black">Phone Number</div>
              <div className="h-[60px] rounded-[8px] border border-[#ccc] px-[15px] text-[19.700px] leading-[61px] text-[#757575]">Enter phone number</div>
              <div className="mt-[18px] h-[37px] text-[19.900px] font-semibold leading-[32px] text-black">Message</div>
              <div className="h-[150px] rounded-[8px] border border-[#ccc] px-[15px] pt-[15px] text-[19.700px] leading-[32px] text-[#757575]">Type your message</div>
              <div className="mt-[5px] text-right text-[17.300px] leading-[28px] text-[#555]">0/250</div>
              <div className="mt-[51px] flex items-center justify-between pl-[29px]">
                <span className="mt-[3px] text-[19.700px] font-semibold text-black underline decoration-[1.500px] underline-offset-[3px]">Clear</span>
                <button className="h-[58px] w-[141px] rounded-full bg-[#ccc] pt-[3px] text-[19.900px] font-semibold text-white">Submit</button>
              </div>
            </section>
            <section className="flex h-[792px] w-[747px] overflow-hidden rounded-l-[25px] bg-white shadow-[0_5px_25px_rgba(0,0,0,0.08)]">
              <div className="w-[724px] overflow-hidden pl-[36px] pr-[36px] pt-[60px]">
                <h2 className="mb-[38px] text-[28.300px] font-bold leading-[41px] tracking-[-0.270px] text-black">
                  Message History <span className="text-[#444]">(7)</span>
                </h2>
                {messages.map((m) => (
                  <MessageItem key={m.date} m={m} />
                ))}
              </div>
              <Scrollbar thumb="mt-[9px] h-[356px]" />
            </section>
          </div>
        </div>
        <Scrollbar thumb="mt-[34px] h-[823px]" />
      </div>

      {/* taskbar */}
      <div className="flex h-[72px] shrink-0 border-t-2 border-[#4d423a] bg-[linear-gradient(90deg,#362117_0%,#33221a_12%,#302015_22%,#342016_32%,#2e2117_48%,#302015_68%,#311d17_78%,#302015_90%,#371f18_100%)]">
        <div className="relative ml-[30px] w-[40px]">
          <svg className="mt-[20px] h-[32px] w-[38px]" viewBox="0 0 38 32">
            <defs>
              <linearGradient id="cl" x1="0" y1="0" x2="0" y2="1">
                <stop offset="0" stopColor="#a5c0f2" />
                <stop offset="1" stopColor="#d9e6fa" />
              </linearGradient>
            </defs>
            <circle cx="26" cy="9" r="9" fill="#f58220" />
            <circle cx="17" cy="16" r="9.500" fill="#a9c2f4" />
            <path d="M7.500 30.500a7.500 7.500 0 0 1 0-15c3 0 6 1 8.500 4 2-4 5.500-6 10-6 6 0 10.500 4 10.500 8.500s-3.500 8.500-8.500 8.500z" fill="url(#cl)" />
          </svg>
          <div className="absolute left-[16px] top-[8px] flex size-[24px] items-center justify-center rounded-full bg-[#c42b1c] text-[16px] text-white">7</div>
        </div>
        <div className="ml-[384px] flex">
          <Slot><StartIcon /></Slot>
          <Slot><SearchIcon /></Slot>
          <Slot><TaskViewIcon /></Slot>
          <Slot><CopilotIcon /></Slot>
          <Slot><AlexaIcon /></Slot>
          <Slot><TeamsIcon /></Slot>
          <Slot><StoreIcon /></Slot>
          <Slot><PaletteIcon /></Slot>
          <Slot open><ExplorerIcon /></Slot>
          <Slot open><EdgeIcon /></Slot>
          <Slot open><WordIcon /></Slot>
          <Slot open><MongoIcon /></Slot>
          <div className="relative flex w-[66px] flex-col items-center pt-[4px]">
            <div className="absolute left-[48px] top-[4px] h-[60px] w-[14px] rounded-r-[6px] border border-l-0 border-[#55473e] bg-[#3b2c23]" />
            <div className="relative -ml-[7px] flex h-[60px] w-[54px] flex-col items-center rounded-[6px] border border-[#4c3e35] bg-[#3e3028] pl-[6px] pt-[11px]">
              <ChromeIcon />
              <div className="mt-[6px] h-[5px] w-[24px] shrink-0 rounded-full bg-[#4cc2ff]" />
              <div className="absolute left-[32px] top-[4px] flex size-[24px] items-center justify-center rounded-full bg-[#512da8] pb-px font-['Roboto',sans-serif] text-[13px] font-bold text-[#cbb8ee]">s</div>
            </div>
          </div>
          <Slot open><VscodeIcon /></Slot>
          <Slot open><PostmanIcon /></Slot>
        </div>
        <div className="ml-auto mr-[30px] flex h-[68px] items-center">
          <svg className="h-[10px] w-[16px]" viewBox="0 0 16 10" fill="none" stroke="#fff" strokeWidth="2" strokeLinecap="round">
            <path d="m1 9 7-7.500L15 9" />
          </svg>
          <svg className="ml-[28px] h-[17px] w-[24px]" viewBox="0 0 24 17">
            <path d="M4.500 7C6 2.500 9 .5 12.500.5c4 0 7 2.500 7.500 6l-8 4z" fill="#9c9692" />
            <path d="M5 16.500a5 5 0 0 1-.5-10c3-1 5 0 8 2.500l5 4z" fill="#cfcbc8" />
            <path d="m1 14.500 11.500-6c2-1.500 5-3.500 8-1.500 4 1.500 4.500 9.500-1.500 9.500H5c-2 0-3-.7-4-2z" fill="#fff" />
          </svg>
          <svg className="ml-[24px] h-[26px] w-[25px]" viewBox="0 0 25 26" fill="none" stroke="#fff" strokeWidth="1.500">
            <path d="M.8 13A11.300 11.300 0 0 1 22 8.500M22.800 1.500v8h-8M2 24v-7h7M2.500 18c2 4 5.500 6.300 9.500 6.300" />
            <circle cx="18" cy="19" r="6" fill="#ff9c0a" stroke="none" />
          </svg>
          <svg className="ml-[23px] h-[18px] w-[24px]" viewBox="0 0 24 18" fill="none" stroke="#fff" strokeWidth="2" strokeLinecap="round">
            <path d="M1 6.200a15.300 15.300 0 0 1 22 0M4.500 9.800a10.600 10.600 0 0 1 15 0M8 13a6 6 0 0 1 8 0" />
            <circle cx="12" cy="15.800" r="1.300" fill="#fff" />
          </svg>
          <svg className="ml-[12px] h-[20px] w-[24px]" viewBox="0 0 24 20" fill="none" stroke="#fff" strokeWidth="1.700" strokeLinecap="round" strokeLinejoin="round">
            <path d="M1 7h4l5.500-5.500v17L5 13H1z" />
            <path d="M13.500 7a5 5 0 0 1 0 6M16.500 4.300c3.200 3.200 3.200 8.200 0 11.400" />
            <path d="M19.800 1.500c4.400 4.700 4.400 12.300 0 17" stroke="#6d6058" />
          </svg>
          <svg className="mb-[3px] ml-[12px] h-[22px] w-[24px]" viewBox="0 0 24 22">
            <path d="M8 5h9c2 0 3.200 1.200 3.200 3.200v7.600c0 2-1.200 3.200-3.200 3.200H4.200c-2 0-3.200-1.200-3.200-3.200V12" fill="none" stroke="#fff" strokeWidth="1.700" />
            <path d="M9.500 7.500h7c.8 0 1.200.4 1.200 1.200v6.600c0 .8-.4 1.200-1.200 1.200h-12c-.8 0-1.200-.4-1.200-1.200v-2.300L6 13z" fill="#fff" />
            <path d="M21 9.500h1.500c1 0 1.500.8 1.500 2.500s-.5 2.500-1.500 2.500H21z" fill="#fff" />
            <path d="M4.500.5 1 7.500h3L2.500 12 8.500 5.500h-3l1-5z" fill="#fff" stroke="#302015" strokeWidth=".8" />
          </svg>
          <div className="mb-px ml-[24px] w-[83px] whitespace-pre text-right text-[17.300px] leading-[24px] tracking-[0.050px] text-white">
            <div>12:55 PM</div>
            <div>7/10/2025</div>
          </div>
        </div>
      </div>
    </div>
  );
}
